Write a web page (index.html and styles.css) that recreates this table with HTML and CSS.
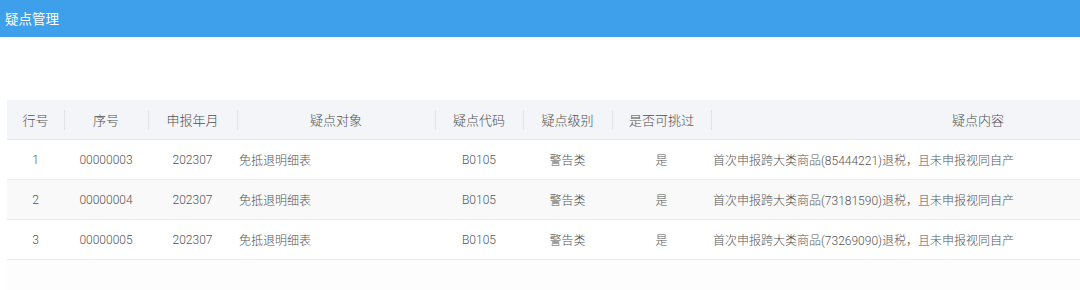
FILE: index.html
```html
<!DOCTYPE html>
<html lang="zh-CN">
<head>
<meta charset="utf-8">
<title>疑点管理</title>
<link rel="stylesheet" href="styles.css">
</head>
<body>
<header class="topbar">疑点管理</header>
<main class="content">
  <div class="table-wrap">
    <table class="grid">
      <colgroup>
        <col class="c1"><col class="c2"><col class="c3"><col class="c4">
        <col class="c5"><col class="c6"><col class="c7"><col class="c8">
      </colgroup>
      <thead>
        <tr>
          <th>行号</th><th class="sep">序号</th><th class="sep">申报年月</th><th class="sep">疑点对象</th>
          <th class="sep">疑点代码</th><th class="sep">疑点级别</th><th class="sep">是否可挑过</th><th class="sep">疑点内容</th>
        </tr>
      </thead>
      <tbody>
        <tr>
          <td>1</td><td>00000003</td><td>202307</td><td class="left">免抵退明细表</td>
          <td>B0105</td><td>警告类</td><td>是</td><td class="left">首次申报跨大类商品(85444221)退税，且未申报视同自产</td>
        </tr>
        <tr class="alt">
          <td>2</td><td>00000004</td><td>202307</td><td class="left">免抵退明细表</td>
          <td>B0105</td><td>警告类</td><td>是</td><td class="left">首次申报跨大类商品(73181590)退税，且未申报视同自产</td>
        </tr>
        <tr>
          <td>3</td><td>00000005</td><td>202307</td><td class="left">免抵退明细表</td>
          <td>B0105</td><td>警告类</td><td>是</td><td class="left">首次申报跨大类商品(73269090)退税，且未申报视同自产</td>
        </tr>
      </tbody>
    </table>
  </div>
</main>
</body>
</html>
```

FILE: styles.css
```css
html, body {
  margin: 0;
  padding: 0;
  background: #ffffff;
  overflow: hidden;
}
body {
  font-family: Roboto, "Noto Sans CJK SC", sans-serif;
  color: #5f5f5f;
}
.topbar {
  height: 37px;
  line-height: 37px;
  background: #3e9feb;
  color: #ffffff;
  font-size: 13.5px;
  padding-left: 5px;
  font-family: "Noto Sans CJK SC", sans-serif;
}
.content {
  padding: 63px 0 0 7px;
}
.table-wrap {
  overflow: hidden;
  background: #fdfdfd;
  height: 190px;
}
.grid {
  width: 1238px;
  border-collapse: collapse;
  table-layout: fixed;
}
.c1 { width: 57px; }
.c2 { width: 84px; }
.c3 { width: 89px; }
.c4 { width: 198px; }
.c5 { width: 88px; }
.c6 { width: 89px; }
.c7 { width: 99px; }
.c8 { width: 534px; }
.grid th {
  height: 39px;
  background: #f4f5f8;
  font-weight: 300;
  font-size: 13px;
  color: #505050;
  font-family: "Noto Sans CJK SC", sans-serif;
  text-align: center;
  padding: 0;
  position: relative;
  border-bottom: 1px solid #e6e8ec;
}
.grid th.sep::before {
  content: "";
  position: absolute;
  left: 0;
  top: 10px;
  height: 20px;
  width: 1px;
  background: #e2e3e7;
}
.grid td {
  height: 39px;
  padding: 0;
  font-size: 12px;
  font-weight: 300;
  text-align: center;
  color: #555555;
  background: #ffffff;
  border-bottom: 1px solid #ebebeb;
  white-space: nowrap;
}
.grid tr.alt td {
  background: #f9f9f9;
}
.grid td.left {
  text-align: left;
  padding-left: 2px;
}
```
